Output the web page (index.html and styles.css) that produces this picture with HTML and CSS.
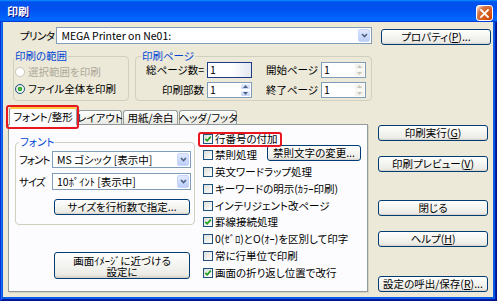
FILE: index.html
```html
<!DOCTYPE html>
<html lang="ja">
<head>
<meta charset="utf-8">
<title>印刷</title>
<link rel="stylesheet" href="styles.css">
</head>
<body>
<div class="window">
  <div class="titlebar">
    <span class="title">印刷</span>
    <span class="close"><svg width="9" height="9" viewBox="0 0 9 9"><path d="M1 1L8 8M8 1L1 8" stroke="#fff" stroke-width="1.8" stroke-linecap="square" fill="none"/></svg></span>
  </div>
  <div class="client">
    <div class="printer-row">
      <span class="printer-label">プリンタ</span>
      <div class="combo printer-combo">
        <span class="combo-text">MEGA Printer on Ne01:</span>
        <span class="combo-btn"><svg width="7" height="5" viewBox="0 0 7 5"><path d="M1 1L3.5 3.5L6 1" stroke="#4D6185" stroke-width="1.6" fill="none"/></svg></span>
      </div>
      <button class="btn prop-btn">プロパティ(<u>P</u>)...</button>
    </div>

    <div class="groups-row">
      <fieldset class="group range-group">
        <legend>印刷の範囲</legend>
        <div class="radio-row disabled"><span class="radio"></span><span>選択範囲を印刷</span></div>
        <div class="radio-row"><span class="radio checked"></span><span>ファイル全体を印刷</span></div>
      </fieldset>
      <fieldset class="group page-group">
        <legend>印刷ページ</legend>
        <div class="page-grid">
          <span class="plabel">総ページ数=</span>
          <span class="edit total-edit"><span class="val">1</span></span>
          <span class="plabel">開始ページ</span>
          <span class="edit"><span class="val">1</span><span class="spin disabled"><span><svg width="5" height="3" viewBox="0 0 5 3"><path d="M0 3L2.5 0L5 3Z" fill="#C9C7BA"/></svg></span><span><svg width="5" height="3" viewBox="0 0 5 3"><path d="M0 0L2.5 3L5 0Z" fill="#C9C7BA"/></svg></span></span></span>
          <span class="plabel">印刷部数</span>
          <span class="edit"><span class="val">1</span><span class="spin"><span><svg width="5" height="3" viewBox="0 0 5 3"><path d="M0 3L2.5 0L5 3Z" fill="#4D6185"/></svg></span><span><svg width="5" height="3" viewBox="0 0 5 3"><path d="M0 0L2.5 3L5 0Z" fill="#4D6185"/></svg></span></span></span>
          <span class="plabel">終了ページ</span>
          <span class="edit"><span class="val">1</span><span class="spin disabled"><span><svg width="5" height="3" viewBox="0 0 5 3"><path d="M0 3L2.5 0L5 3Z" fill="#C9C7BA"/></svg></span><span><svg width="5" height="3" viewBox="0 0 5 3"><path d="M0 0L2.5 3L5 0Z" fill="#C9C7BA"/></svg></span></span></span>
        </div>
      </fieldset>
    </div>

    <div class="main-row">
      <div class="tabs-area">
        <div class="tabs">
          <span class="tab active">フォント/整形<span class="mark mark-tab"></span></span>
          <span class="tab tab-layout">レイアウト</span>
          <span class="tab tab-paper">用紙/余白</span>
          <span class="tab tab-header">ヘッダ/フッタ</span>
        </div>
        <div class="panel">
          <div class="panel-left">
            <fieldset class="group font-group">
              <legend>フォント</legend>
              <div class="font-row first">
                <span class="flabel">フォント</span>
                <div class="combo font-combo">
                  <span class="combo-text">MS ゴシック [表示中]</span>
                  <span class="combo-btn"><svg width="7" height="5" viewBox="0 0 7 5"><path d="M1 1L3.5 3.5L6 1" stroke="#4D6185" stroke-width="1.6" fill="none"/></svg></span>
                </div>
              </div>
              <div class="font-row">
                <span class="flabel">サイズ</span>
                <div class="combo font-combo">
                  <span class="combo-text">10ﾎﾟｲﾝﾄ [表示中]</span>
                  <span class="combo-btn"><svg width="7" height="5" viewBox="0 0 7 5"><path d="M1 1L3.5 3.5L6 1" stroke="#4D6185" stroke-width="1.6" fill="none"/></svg></span>
                </div>
              </div>
              <button class="btn size-btn">サイズを行桁数で指定...</button>
            </fieldset>
            <button class="btn screen-btn">画面ｲﾒｰｼﾞに近づける<br>設定に</button>
          </div>
          <div class="checks">
            <div class="check-row first"><span class="checkbox checked"><svg width="8" height="8" viewBox="0 0 8 8"><path d="M1.3 3.8L3.2 5.8L6.8 1.6" stroke="#21A121" stroke-width="1.7" fill="none"/></svg></span><span>行番号の付加</span><span class="mark mark-check"></span></div>
            <div class="check-row"><span class="checkbox"></span><span>禁則処理</span><button class="btn kinsoku-btn">禁則文字の変更...</button></div>
            <div class="check-row"><span class="checkbox"></span><span>英文ワードラップ処理</span></div>
            <div class="check-row"><span class="checkbox"></span><span>キーワードの明示(ｶﾗｰ印刷)</span></div>
            <div class="check-row"><span class="checkbox"></span><span>インテリジェント改ページ</span></div>
            <div class="check-row"><span class="checkbox checked"><svg width="8" height="8" viewBox="0 0 8 8"><path d="M1.3 3.8L3.2 5.8L6.8 1.6" stroke="#21A121" stroke-width="1.7" fill="none"/></svg></span><span>罫線接続処理</span></div>
            <div class="check-row"><span class="checkbox"></span><span>0(ｾﾞﾛ)とO(ｵｰ)を区別して印字</span></div>
            <div class="check-row"><span class="checkbox"></span><span>常に行単位で印刷</span></div>
            <div class="check-row"><span class="checkbox checked"><svg width="8" height="8" viewBox="0 0 8 8"><path d="M1.3 3.8L3.2 5.8L6.8 1.6" stroke="#21A121" stroke-width="1.7" fill="none"/></svg></span><span>画面の折り返し位置で改行</span></div>
          </div>
        </div>
      </div>
      <div class="side">
        <button class="btn side-btn b1">印刷実行(<u>G</u>)</button>
        <button class="btn side-btn b2">印刷プレビュー(<u>V</u>)</button>
        <button class="btn side-btn b3">閉じる</button>
        <button class="btn side-btn b4">ヘルプ(<u>H</u>)</button>
        <button class="btn side-btn b5">設定の呼出/保存(<u>R</u>)...</button>
      </div>
    </div>
  </div>
</div>
</body>
</html>
```

FILE: styles.css
```css
* { box-sizing: border-box; }
html, body { margin: 0; padding: 0; }
body {
  width: 497px;
  height: 301px;
  overflow: hidden;
  font-family: "Noto Sans CJK JP", "Noto Sans", sans-serif;
  font-size: 10.5px;
  line-height: 12px;
  color: #000;
  font-feature-settings: "palt";
}

.window {
  width: 497px;
  height: 301px;
  display: flex;
  flex-direction: column;
  background: #0a5ae8;
  box-shadow: inset 1px 0 #0831d9, inset -1px 0 #00138c, inset 0 -1px #00138c,
              inset 2px 0 #166aee, inset -2px 0 #001ea0, inset 0 -2px #001ea0;
}

.titlebar {
  height: 22px;
  flex: none;
  display: flex;
  justify-content: space-between;
  padding: 0 4px 0 7px;
  background: linear-gradient(180deg, #0997ff, #0053ee 8%, #0050ee 40%, #0066ff 88%, #0066ff 93%, #005bff 95%, #003dd7 96%, #003dd7);
}
.title {
  color: #fff;
  font-weight: bold;
  font-size: 11px;
  line-height: 22px;
  text-shadow: 1px 1px #0f1089;
}
.close {
  width: 17px;
  height: 16px;
  margin-top: 5px;
  border: 1px solid #fff;
  border-radius: 3px;
  background: radial-gradient(circle at 90% 90%, #cc4600 0, #dc6527 55%, #cd7546 70%, #ffccb2 90%, #fff 100%);
  display: flex;
  align-items: center;
  justify-content: center;
}

.client {
  flex: 1;
  margin: 0 4px 4px 3px;
  background: #ece9d8;
  display: flex;
  flex-direction: column;
}

/* buttons */
.btn {
  font: inherit;
  font-feature-settings: "palt";
  color: #000;
  padding: 0;
  border: 1px solid #003c74;
  border-radius: 3px;
  background: linear-gradient(180deg, #fff, #f3f3ef 50%, #ecebe6 86%, #d6d0c5);
  display: flex;
  align-items: center;
  justify-content: center;
  white-space: nowrap;
  height: 16px;
}
.btn u { text-decoration: underline; text-underline-offset: 1px; }

/* combo */
.combo {
  display: flex;
  align-items: center;
  height: 17px;
  border: 1px solid #7f9db9;
  background: #fff;
  padding-left: 4px;
}
.combo-text { flex: 1; white-space: nowrap; }
.combo-btn {
  width: 12px;
  align-self: stretch;
  margin: 1px;
  border: 1px solid #c6d6fc;
  border-radius: 2px;
  background: linear-gradient(180deg, #e0e9fe, #bccdf7);
  display: flex;
  align-items: center;
  justify-content: center;
}

/* printer row */
.printer-row {
  display: flex;
  align-items: flex-start;
  margin-top: 5px;
}
.printer-label {
  margin: 0 2px 0 17px;
  line-height: 17px;
  white-space: nowrap;
  letter-spacing: -0.6px;
}
.printer-combo { flex: 1; }
.prop-btn { width: 110px; margin: 2px 2px 0 9px; flex: none; }

/* group boxes */
fieldset.group {
  margin: 0;
  padding: 0;
  border: 1px solid #d0d0bf;
  border-radius: 4px;
  min-width: 0;
}
fieldset.group legend {
  padding: 0 1px;
  color: #0046d5;
  line-height: 12px;
  height: 12px;
  white-space: nowrap;
}

.groups-row {
  display: flex;
  margin-top: 5px;
}
.range-group {
  margin-left: 10px !important;
  width: 116px;
  height: 51px;
}
.range-group legend { margin-left: 0; }
.radio-row {
  display: flex;
  align-items: center;
  height: 17px;
  white-space: nowrap;
}
.radio-row:first-of-type { margin-top: 1px; }
.range-group .radio-row { margin-left: 1px; }
.radio {
  width: 10px;
  height: 10px;
  border-radius: 50%;
  border: 1px solid #1c5180;
  background: linear-gradient(135deg, #dcdcd7, #fff);
  margin-right: 3px;
  flex: none;
}
.radio.checked {
  background: radial-gradient(circle, #5ed65a 0, #21a121 1.8px, rgba(33,161,33,0) 2.6px), linear-gradient(135deg, #dcdcd7, #fff);
}
.radio-row.disabled { color: #aca899; }
.radio-row.disabled .radio { border-color: #cac8bb; background: #fff; }

.page-group {
  margin-left: 6px !important;
  width: 237px;
  height: 51px;
}
.page-group legend { margin-left: 5px; }
.page-grid {
  display: grid;
  grid-template-columns: 71px 45px 69px 45px;
  grid-auto-rows: 16px;
  row-gap: 4px;
}
.plabel {
  text-align: right;
  padding-right: 3px;
  line-height: 16px;
  white-space: nowrap;
}
.edit {
  display: flex;
  align-items: center;
  height: 16px;
  border: 1px solid #7f9db9;
  background: #fff;
  padding-left: 2px;
}
.edit .val { flex: 1; }
.total-edit {
  border-color: #1d3a87;
  background: linear-gradient(90deg, #fff 55%, #e4e8f0);
}
.spin {
  width: 11px;
  align-self: stretch;
  display: flex;
  flex-direction: column;
  margin: 0;
}
.spin span {
  flex: 1;
  display: flex;
  align-items: center;
  justify-content: center;
  border: 1px solid #fff;
  border-radius: 2px;
  background: linear-gradient(180deg, #e4ecfe, #c5d5fa);
}
.spin.disabled span {
  background: #f4f3ee;
  border-color: #fbfbf8;
}

/* main row */
.main-row {
  display: flex;
  margin-top: 1px;
}
.tabs-area {
  margin-left: 5px;
  width: 360px;
  display: flex;
  flex-direction: column;
}
.tabs {
  display: flex;
  align-items: flex-end;
  height: 22px;
  padding-left: 1px;
  gap: 1px;
}
.tab {
  height: 14px;
  border: 1px solid #919b9c;
  border-bottom: none;
  border-radius: 3px 3px 0 0;
  background: linear-gradient(180deg, #fff, #f3f3ef 60%, #e8e7e0);
  display: flex;
  align-items: center;
  justify-content: center;
  white-space: nowrap;
  padding-top: 1px;
}
.tab.active {
  width: 68px;
  height: 18px;
  margin-bottom: -1px;
  position: relative;
  z-index: 1;
  background: #fcfcfe;
  border-top: 2px solid #ffc83c;
  padding-top: 0;
}
.tab-layout { width: 44px; }
.tab-paper { width: 55px; }
.tab-header { width: 58px; }

.mark {
  position: absolute;
  border: 2px solid #e8161e;
  border-radius: 3px;
  pointer-events: none;
}
.mark-tab { left: -4px; top: -4px; width: 73px; height: 24px; }

.panel {
  width: 360px;
  height: 168px;
  border: 1px solid #919b9c;
  background: #fcfcfe;
  display: flex;
  box-shadow: 1px 1px 0 #d5d2c3;
}
.panel-left {
  width: 194px;
  flex: none;
  display: flex;
  flex-direction: column;
}
.font-group {
  margin: 11px 0 0 6px !important;
  width: 180px;
  height: 89px;
}
.font-group legend { margin-left: 3px; }
.font-row {
  display: flex;
  align-items: center;
  height: 17px;
  margin-top: 5px;
}
.font-row.first { margin-top: 3px; }
.flabel { width: 36px; padding-left: 3px; white-space: nowrap; letter-spacing: -1px; }
.font-combo { width: 139px; }
.size-btn { width: 136px; margin: 9px 0 0 38px; }
.screen-btn {
  width: 136px;
  height: 27px;
  margin: 27px 0 0 45px;
  display: block;
  text-align: center;
  line-height: 11px;
  padding-top: 1px;
}

.checks {
  padding-top: 6px;
  display: flex;
  flex-direction: column;
}
.check-row {
  display: flex;
  align-items: center;
  height: 16.75px;
  white-space: nowrap;
}
.check-row.first { height: 16px; position: relative; }
.checkbox {
  width: 10px;
  height: 10px;
  border: 1px solid #1c5180;
  background: linear-gradient(135deg, #dcdcd7, #fff);
  margin-right: 2px;
  flex: none;
  display: flex;
  align-items: center;
  justify-content: center;
}
.mark-check { left: -5px; top: 1px; width: 84px; height: 15px; }
.kinsoku-btn {
  width: 94px;
  margin: -2px 0 0 10px;
  align-self: flex-start;
}

.side {
  margin-left: 10px;
  width: 110px;
  display: flex;
  flex-direction: column;
}
.side-btn { width: 110px; }
.b1 { margin-top: 23px; }
.b2 { margin-top: 15px; }
.b3 { margin-top: 28px; }
.b4 { margin-top: 15px; }
.b5 { margin-top: 29px; }
```
